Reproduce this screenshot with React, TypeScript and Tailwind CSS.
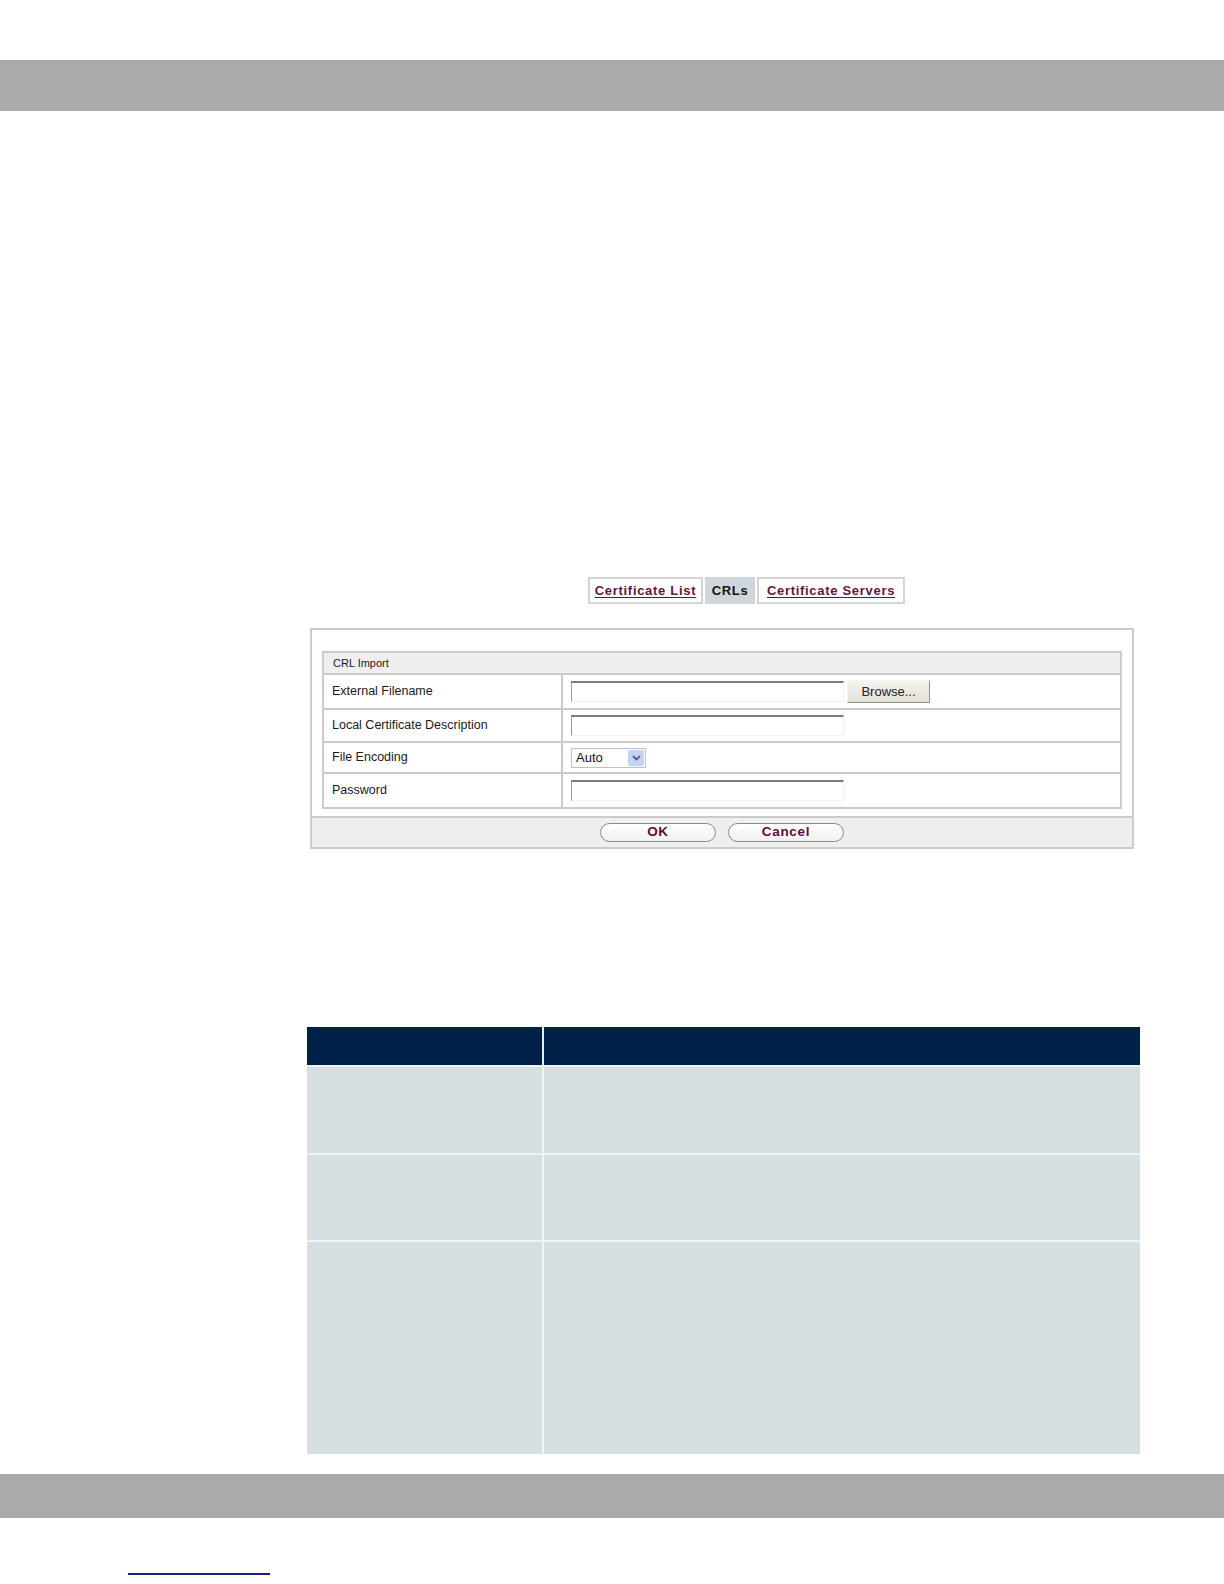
import React from "react";

const tabs = [
  { label: "Certificate List", active: false, w: "w-[115px]" },
  { label: "CRLs", active: true, w: "w-[50px]" },
  { label: "Certificate Servers", active: false, w: "w-[148px]" },
];

const rows = [
  { label: "External Filename", h: "h-[35px]", field: "file" },
  { label: "Local Certificate Description", h: "h-[33px]", field: "text" },
  { label: "File Encoding", h: "h-[31px]", field: "select" },
  { label: "Password", h: "h-[33px]", field: "text" },
];

function TextBox() {
  return (
    <div className="h-[21px] w-[273px] border-t-2 border-l border-t-[#7b7b7b] border-l-[#9a9a9a] border-b border-r border-b-[#f2f2f2] border-r-[#f2f2f2] bg-white" />
  );
}

function Field({ type }: { type: string }) {
  if (type === "file") {
    return (
      <div className="flex items-center gap-[3px]">
        <TextBox />
        <div className="flex h-[23px] w-[83px] items-center justify-center border border-[#8f8f8f] border-l-[#f5f5f5] border-t-[#f5f5f5] bg-gradient-to-b from-[#f4f3ee] to-[#e2e0d6] text-[13px] text-[#222]">
          Browse...
        </div>
      </div>
    );
  }
  if (type === "select") {
    return (
      <div className="flex h-[20px] w-[75px] items-center border border-[#b5c3d6] bg-white">
        <span className="flex-1 pl-[4px] text-[13px] text-[#111]">Auto</span>
        <span className="mr-[1px] flex h-[16px] w-[16px] items-center justify-center rounded-[2px] bg-[#c4d3f6]">
          <svg width="9" height="6" viewBox="0 0 9 6">
            <path d="M1 1 L4.5 4.5 L8 1" fill="none" stroke="#4d6185" strokeWidth="1.8" />
          </svg>
        </span>
      </div>
    );
  }
  return <TextBox />;
}

export default function App() {
  return (
    <div className="relative h-[1584px] w-[1224px] overflow-hidden bg-white font-['Liberation_Sans',Arial,sans-serif]">
      <div className="h-[60px]" />
      <div className="h-[51px] bg-[#aaaaaa]" />

      {/* tabs */}
      <div className="mt-[466px] flex h-[27px] gap-[2px] pl-[588px]">
        {tabs.map((t) => (
          <div
            key={t.label}
            className={`${t.w} flex items-center justify-center border-2 text-[13px] font-bold tracking-[0.7px] ${
              t.active
                ? "border-[#cfd6db] bg-[#cfd6db] text-[#111]"
                : "border-[#d4d4d4] bg-white text-[#6a1240] underline underline-offset-2"
            }`}
          >
            {t.label}
          </div>
        ))}
      </div>

      {/* form */}
      <div className="ml-[310px] mt-[24px] flex h-[221px] w-[824px] flex-col border-2 border-[#cbcbcb]">
        <div className="px-[10px] pt-[21px]">
          <div className="border-2 border-[#cbcbcb] text-[12.5px] text-[#1a1a1a]">
            <div className="flex h-[22px] items-center border-b-2 border-[#cbcbcb] bg-[#efefef] pl-[9px] text-[11px]">
              CRL Import
            </div>
            {rows.map((r, i) => (
              <div
                key={r.label}
                className={`flex ${r.h} ${i < rows.length - 1 ? "border-b-2 border-[#cbcbcb]" : ""}`}
              >
                <div className="flex w-[239px] items-center border-r-2 border-[#cbcbcb] pl-[8px]">
                  {r.label}
                </div>
                <div className="flex flex-1 items-center pl-[8px]">
                  <Field type={r.field} />
                </div>
              </div>
            ))}
          </div>
        </div>
        <div className="mt-auto flex h-[31px] items-center justify-center gap-[12px] border-t-2 border-[#cbcbcb] bg-[#efefef]">
          {["OK", "Cancel"].map((b) => (
            <div
              key={b}
              className="flex h-[19px] w-[116px] items-center justify-center rounded-full border border-[#8a8a8a] bg-gradient-to-b from-white to-[#f1f1f1] text-[13.5px] font-bold tracking-[0.7px] text-[#5e0c3a]"
            >
              {b}
            </div>
          ))}
        </div>
      </div>

      {/* description table */}
      <div className="ml-[307px] mt-[178px] w-[833px]">
        <div className="flex h-[38px] bg-[#002147]">
          <div className="w-[237px] border-r-2 border-[#e8eef2]" />
          <div className="flex-1" />
        </div>
        {["h-[88px]", "h-[87px]", "h-[214px]"].map((h, i) => (
          <div key={i} className={`flex ${h} border-t-2 border-[#eef3f6] bg-[#d7dee2]`}>
            <div className="w-[237px] border-r-2 border-[#eef3f6]" />
            <div className="flex-1" />
          </div>
        ))}
      </div>

      <div className="mt-[20px] h-[44px] bg-[#aaaaaa]" />

      <div className="ml-[128px] mt-[55px] h-[2px] w-[142px] bg-[#1b1b8a]" />
    </div>
  );
}
